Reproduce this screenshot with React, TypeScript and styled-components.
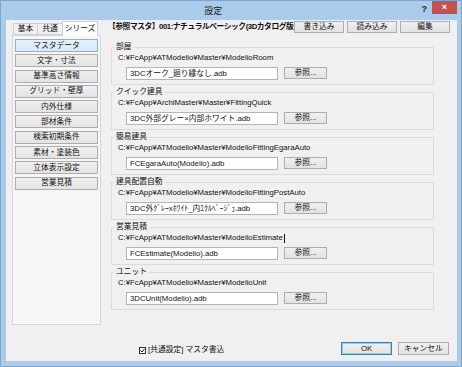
import React from "react";
import styled, { createGlobalStyle } from "styled-components";

const GlobalStyle = createGlobalStyle`
  html, body {
    margin: 0;
    padding: 0;
    background: #ffffff;
  }
  body {
    font-family: "Liberation Sans", "Noto Sans CJK JP", sans-serif;
    font-size: 7.75px;
    color: #111;
  }
`;

const Window = styled.div`
  width: 462px;
  height: 367px;
  box-sizing: border-box;
  background: #aacbea;
  border: 1px solid #7fa6cf;
  display: flex;
  flex-direction: column;
`;

const TitleBar = styled.div`
  height: 19px;
  display: flex;
  align-items: center;
`;

const Title = styled.div`
  flex: 1;
  text-align: center;
  font-size: 9px;
  color: #1b1b1b;
  padding-left: 4px;
`;

const HelpMark = styled.span`
  font-size: 9px;
  font-weight: bold;
  color: #222;
  margin-right: 5px;
  margin-top: -3px;
`;

const CloseBox = styled.div`
  width: 25px;
  height: 13px;
  margin-top: -7px;
  margin-right: 4px;
  background: #c74f4f;
  color: #fff;
  font-size: 9px;
  font-weight: bold;
  display: flex;
  align-items: center;
  justify-content: center;
`;

const Content = styled.div`
  flex: 1;
  margin: 0 4px 5px 5px;
  background: #f0f0f0;
  display: flex;
  flex-direction: column;
`;

const Main = styled.div`
  display: flex;
  align-items: flex-start;
`;

const LeftColumn = styled.div`
  width: 89px;
  flex-shrink: 0;
  margin-left: 6px;
  margin-top: 1px;
  display: flex;
  flex-direction: column;
`;

const TabRow = styled.div`
  display: flex;
  align-items: flex-end;
  height: 14px;
  padding-left: 2px;
  position: relative;
  z-index: 1;
`;

const Tab = styled.div<{ w: number; active?: boolean }>`
  box-sizing: border-box;
  flex-shrink: 0;
  width: ${(p) => p.w}px;
  height: ${(p) => (p.active ? 15 : 12)}px;
  margin-bottom: ${(p) => (p.active ? -1 : 0)}px;
  border: 1px solid #cfcfcf;
  border-bottom: ${(p) => (p.active ? "none" : "1px solid #cfcfcf")};
  margin-left: -1px;
  background: ${(p) => (p.active ? "#ffffff" : "#f0f0f0")};
  display: flex;
  align-items: center;
  justify-content: center;
  white-space: nowrap;
  line-height: 10px;
`;

const TabPanel = styled.div`
  box-sizing: border-box;
  height: 290px;
  border: 1px solid #d6d6d6;
  background: #f6f6f6;
  padding: 3px 2px;
  display: flex;
  flex-direction: column;
  gap: 2.3px;
`;

const SideButton = styled.div<{ active?: boolean }>`
  box-sizing: border-box;
  height: 13px;
  border: 1px solid ${(p) => (p.active ? "#7eb4ea" : "#adadad")};
  background: ${(p) =>
    p.active
      ? "linear-gradient(#e5f1fb, #d7e9fa)"
      : "linear-gradient(#f0f0f0, #e3e3e3)"};
  display: flex;
  align-items: center;
  justify-content: center;
  white-space: nowrap;
  line-height: 10px;
`;

const RightColumn = styled.div`
  flex: 1;
  margin-left: 7px;
  display: flex;
  flex-direction: column;
`;

const Header = styled.div`
  display: flex;
  align-items: center;
  height: 12px;
  margin-top: 1px;
`;

const HeaderTitle = styled.div`
  width: 186px;
  flex-shrink: 0;
  white-space: nowrap;
  font-weight: bold;
  letter-spacing: -0.45px;
  line-height: 12px;
`;

const PushButton = styled.div<{ w: number; primary?: boolean }>`
  box-sizing: border-box;
  flex-shrink: 0;
  width: ${(p) => p.w}px;
  height: ${(p) => (p.primary !== undefined ? 13 : 12)}px;
  border: 1px solid ${(p) => (p.primary ? "#3c7fb1" : "#adadad")};
  box-shadow: ${(p) => (p.primary ? "inset 0 0 0 1px #9ccaf0" : "none")};
  background: linear-gradient(#f0f0f0, #e2e2e2);
  display: flex;
  align-items: center;
  justify-content: center;
  white-space: nowrap;
  line-height: 10px;
`;

const HeaderButtons = styled.div`
  display: flex;
  gap: 3px;
`;

const GroupList = styled.div`
  margin-top: 9px;
  display: flex;
  flex-direction: column;
  gap: 2px;
  width: 323px;
  margin-left: 3px;
`;

const Group = styled.fieldset`
  margin: 0;
  padding: 0 4px 4px 6px;
  border: 1px solid #dcdcdc;
  min-width: 0;
`;

const Legend = styled.legend`
  padding: 0 2px;
  margin-left: -4px;
  line-height: 10px;
  height: 10px;
`;

const PathText = styled.div`
  margin-top: 1px;
  line-height: 10px;
  height: 10px;
  white-space: nowrap;
  display: flex;
  align-items: center;
`;

const Caret = styled.span`
  display: inline-block;
  width: 1px;
  height: 9px;
  background: #111;
  margin-left: 1px;
`;

const FileRow = styled.div`
  margin-top: 4px;
  display: flex;
  gap: 6px;
  padding-left: 8px;
`;

const FileInput = styled.div`
  box-sizing: border-box;
  width: 152px;
  height: 13px;
  border: 1px solid #b4b4b4;
  background: #ffffff;
  padding-left: 3px;
  line-height: 11px;
  white-space: nowrap;
  overflow: hidden;
`;

const Footer = styled.div`
  margin-top: auto;
  margin-bottom: 6px;
  display: flex;
  align-items: center;
  padding-left: 133px;
  padding-right: 8px;
  gap: 6px;
`;

const CheckLabel = styled.label`
  display: flex;
  align-items: center;
  gap: 2px;
  margin-right: auto;
  margin-top: 3px;
  white-space: nowrap;
  line-height: 10px;
`;

const CheckBox = styled.span`
  box-sizing: border-box;
  width: 7px;
  height: 7px;
  border: 1px solid #333;
  background: #fff;
  display: flex;
  align-items: center;
  justify-content: center;
`;

const sideItems = [
  "マスタデータ",
  "文字・寸法",
  "基準高さ情報",
  "グリッド・壁厚",
  "内外仕様",
  "部材条件",
  "検索初期条件",
  "素材・塗装色",
  "立体表示設定",
  "営業見積",
];

const groups = [
  {
    label: "部屋",
    path: "C:¥FcApp¥ATModelio¥Master¥ModelioRoom",
    file: "3DCオーク_廻り縁なし.adb",
  },
  {
    label: "クイック建具",
    path: "C:¥FcApp¥ArchiMaster¥Master¥FittingQuick",
    file: "3DC外部グレー×内部ホワイト.adb",
  },
  {
    label: "簡易建具",
    path: "C:¥FcApp¥ATModelio¥Master¥ModelioFittingEgaraAuto",
    file: "FCEgaraAuto(Modelio).adb",
  },
  {
    label: "建具配置自動",
    path: "C:¥FcApp¥ATModelio¥Master¥ModelioFittingPostAuto",
    file: "3DC外ｸﾞﾚｰxﾎﾜｲﾄ_内ｴｸﾙﾍﾞｰｼﾞｭ.adb",
  },
  {
    label: "営業見積",
    path: "C:¥FcApp¥ATModelio¥Master¥ModelioEstimate",
    file: "FCEstimate(Modelio).adb",
    caret: true,
  },
  {
    label: "ユニット",
    path: "C:¥FcApp¥ATModelio¥Master¥ModelioUnit",
    file: "3DCUnit(Modelio).adb",
  },
];

const App: React.FC = () => {
  return (
    <>
      <GlobalStyle />
      <Window>
        <TitleBar>
          <Title>設定</Title>
          <HelpMark>?</HelpMark>
          <CloseBox>×</CloseBox>
        </TitleBar>
        <Content>
          <Main>
            <LeftColumn>
              <TabRow>
                <Tab w={25}>基本</Tab>
                <Tab w={26}>共通</Tab>
                <Tab w={36} active>
                  シリーズ
                </Tab>
              </TabRow>
              <TabPanel>
                {sideItems.map((item, i) => (
                  <SideButton key={item} active={i === 0}>
                    {item}
                  </SideButton>
                ))}
              </TabPanel>
            </LeftColumn>

            <RightColumn>
              <Header>
                <HeaderTitle>【参照マスタ】001:ナチュラルベーシック(3Dカタログ版</HeaderTitle>
                <HeaderButtons>
                  <PushButton w={50}>書き込み</PushButton>
                  <PushButton w={50}>読み込み</PushButton>
                  <PushButton w={50}>編集</PushButton>
                </HeaderButtons>
              </Header>

              <GroupList>
                {groups.map((g) => (
                  <Group key={g.label}>
                    <Legend>{g.label}</Legend>
                    <PathText>
                      {g.path}
                      {g.caret && <Caret />}
                    </PathText>
                    <FileRow>
                      <FileInput>{g.file}</FileInput>
                      <PushButton w={43}>参照...</PushButton>
                    </FileRow>
                  </Group>
                ))}
              </GroupList>
            </RightColumn>
          </Main>

          <Footer>
            <CheckLabel>
              <CheckBox>
                <svg width="5" height="5" viewBox="0 0 5 5">
                  <path d="M0.5 2.5 L2 4 L4.5 0.8" stroke="#111" strokeWidth="1" fill="none" />
                </svg>
              </CheckBox>
              [共通設定] マスタ書込
            </CheckLabel>
            <PushButton w={51} primary>
              OK
            </PushButton>
            <PushButton w={51} primary={false}>
              キャンセル
            </PushButton>
          </Footer>
        </Content>
      </Window>
    </>
  );
};

export default App;
